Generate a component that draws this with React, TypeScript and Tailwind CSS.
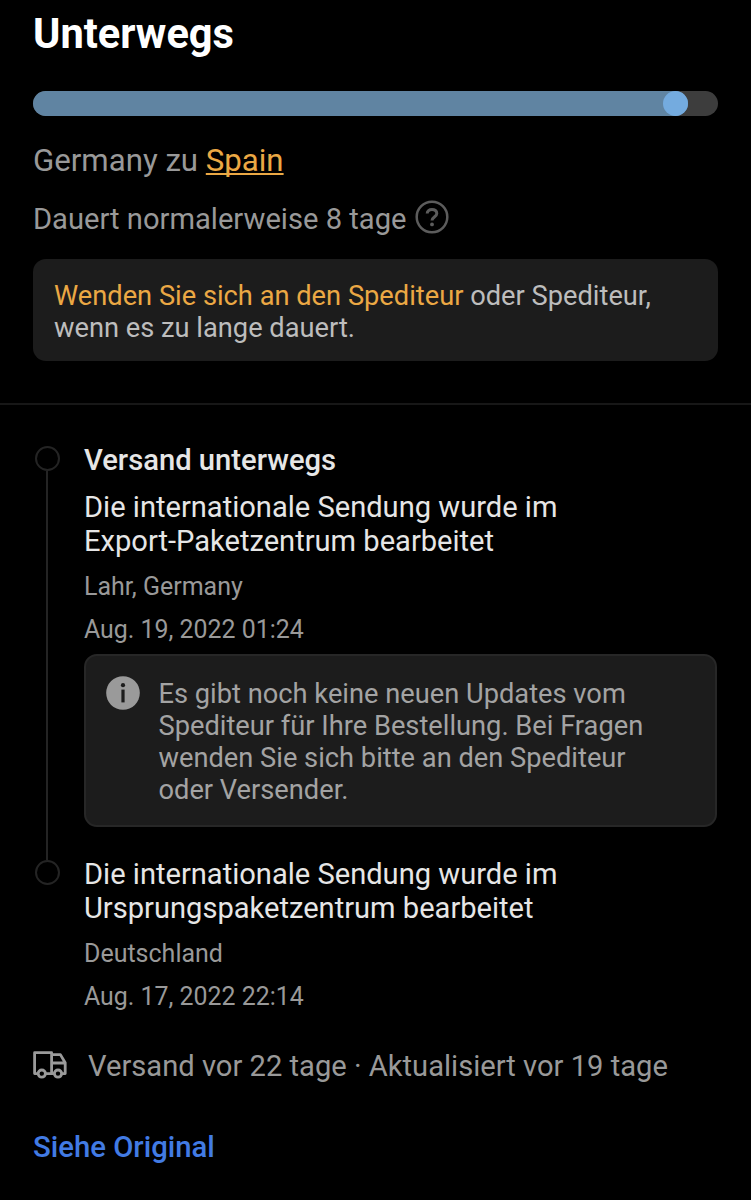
import type React from "react"
import clsx from "clsx"

interface TrackingEvent {
  id: string
  status?: string
  description: string[]
  location: string
  date: string
  note?: string[]
}

const events: TrackingEvent[] = [
  {
    id: "export",
    status: "Versand unterwegs",
    description: ["Die internationale Sendung wurde im", "Export-Paketzentrum bearbeitet"],
    location: "Lahr, Germany",
    date: "Aug. 19, 2022 01:24",
    note: [
      "Es gibt noch keine neuen Updates vom",
      "Spediteur für Ihre Bestellung. Bei Fragen",
      "wenden Sie sich bitte an den Spediteur",
      "oder Versender.",
    ],
  },
  {
    id: "origin",
    description: ["Die internationale Sendung wurde im", "Ursprungspaketzentrum bearbeitet"],
    location: "Deutschland",
    date: "Aug. 17, 2022 22:14",
  },
]

const HelpIcon = () => (
  <svg className="w-[34px] h-[34px]" viewBox="0 0 34 34" fill="none" stroke="#5c5c5c">
    <circle cx="17" cy="17" r="15.3" strokeWidth="2.5" />
    <path d="M12.2 13.6c0-2.6 2-4.2 4.8-4.2s4.8 1.6 4.8 4.1c0 3.4-4.8 3.7-4.8 7" strokeWidth="3" />
    <circle cx="17" cy="24.4" r="1.9" fill="#5c5c5c" stroke="none" />
  </svg>
)

const InfoIcon = () => (
  <svg className="w-[34px] h-[34px] shrink-0" viewBox="0 0 34 34">
    <circle cx="17" cy="17" r="16.8" fill="#9a9a9a" />
    <circle cx="17" cy="9.2" r="2.1" fill="#1c1c1c" />
    <rect x="15.4" y="13.6" width="3.2" height="12.8" fill="#1c1c1c" />
  </svg>
)

const TruckIcon = () => (
  <svg
    className="-mt-[3px] w-[34px] h-[28px] shrink-0"
    viewBox="0 0 34 28"
    fill="none"
    stroke="#9a9a9a"
    strokeWidth="2.8"
    strokeLinejoin="round"
  >
    <path d="M4.8 22.6H1.6V1.7H18.6V22.6M12.4 22.6H21.2" />
    <path d="M18.6 3.6H27.4L32.2 11.8V22.6H29M18.6 12H32.2" />
    <circle cx="8.8" cy="22.6" r="3.6" />
    <circle cx="25" cy="22.6" r="3.6" />
  </svg>
)

const TimelineItem: React.FC<{ event: TrackingEvent; isFirst: boolean; isLast: boolean }> = ({
  event,
  isFirst,
  isLast,
}) => {
  return (
    <div className="flex">
      {/* Rail */}
      <div className="ml-px flex w-[25px] shrink-0 flex-col items-center">
        <div className={clsx("mr-px h-[3px] w-0.5 shrink-0", !isFirst && "bg-[#242424]")} />
        <div className="h-[25px] w-[25px] shrink-0 rounded-full border-2 border-[#242424]" />
        {!isLast && <div className="mr-px w-0.5 flex-1 bg-[#242424]" />}
      </div>

      <div className={clsx("ml-[24px] flex-1", !isLast && "pb-[30px]")}>
        {event.status && (
          <div className="mb-[13px] text-[29.2px] leading-[34px] font-medium text-[#e6e6e6]">{event.status}</div>
        )}
        <div className="text-[29.1px] leading-[34px] text-[#e6e6e6]">
          {event.description.map((line) => (
            <div key={line}>{line}</div>
          ))}
        </div>
        <div className="mt-[14px] text-[25px] leading-[30px] text-[#999999]">{event.location}</div>
        <div className="mt-[13px] text-[24.9px] leading-[30px] text-[#999999]">{event.date}</div>

        {event.note && (
          <div className="mt-[9px] flex h-[173px] rounded-[13px] border-2 border-[#272727] bg-[#1c1c1c] pl-[20px] pt-[22px]">
            <div className="-mt-[2px]">
              <InfoIcon />
            </div>
            <div className="ml-[18.5px] text-[27.25px] leading-8 whitespace-nowrap text-[#a3a3a3]">
              {event.note.map((line) => (
                <div key={line}>{line}</div>
              ))}
            </div>
          </div>
        )}
      </div>
    </div>
  )
}

const App = () => {
  return (
    <div className="h-[1200px] w-[751px] overflow-hidden bg-black pt-[10px] font-[Roboto,sans-serif]">
      <div className="px-[33px]">
        <h1 className="text-[41.6px] leading-[48px] font-bold text-white">Unterwegs</h1>

        {/* Progress */}
        <div className="mt-[33px] h-[25px] w-[685px] rounded-full bg-[#3d3d3d]">
          <div className="flex h-full w-[655px] justify-end rounded-full bg-[#6084a2]">
            <div className="h-[25px] w-[25px] rounded-full bg-[#74abdf]" />
          </div>
        </div>

        <div className="mt-[25px] text-[31.2px] leading-10 text-[#999999]">
          Germany zu{" "}
          <a className="text-[#eba844] underline decoration-2 underline-offset-[2px] [text-decoration-skip-ink:none]">
            Spain
          </a>
        </div>
        <div className="mt-[18px] flex h-[41px] text-[29.15px] leading-[41px] text-[#999999]">
          <span>Dauert normalerweise 8 tage</span>
          <span className="mt-px ml-[9px]">
            <HelpIcon />
          </span>
        </div>

        <div className="mt-[19px] h-[102px] w-[685px] rounded-[13px] bg-[#1c1c1c] px-[21px] pt-[21px] text-[27.25px] leading-8 whitespace-nowrap text-[#bdbdbd]">
          <div>
            <span className="text-[#eba844]">Wenden Sie sich an den Spediteur</span> oder Spediteur,
          </div>
          <div>wenn es zu lange dauert.</div>
        </div>
      </div>

      <div className="mt-[42px] h-0.5 bg-[#171717]" />

      <div className="mt-[38px] pr-[34px] pl-[34px]">
        {events.map((event, index) => (
          <TimelineItem
            key={event.id}
            event={event}
            isFirst={index === 0}
            isLast={index === events.length - 1}
          />
        ))}
      </div>

      <div className="mt-[34px] flex items-center pl-[33px] text-[29.15px] leading-10 text-[#999999]">
        <TruckIcon />
        <span className="ml-[21px] whitespace-nowrap">Versand vor 22 tage · Aktualisiert vor 19 tage</span>
      </div>

      <a className="mt-[44px] block pl-[33px] text-[29.3px] leading-[34px] font-medium text-[#427be4]">
        Siehe Original
      </a>
    </div>
  )
}

export default App
